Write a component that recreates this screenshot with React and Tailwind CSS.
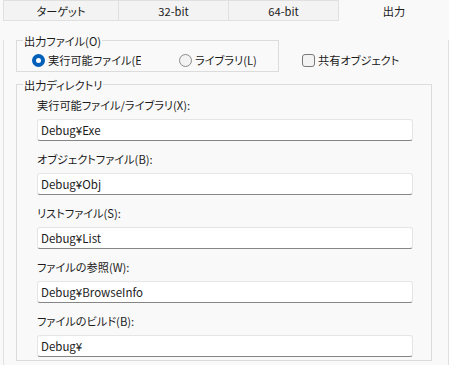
import React from "react";

const font = "font-['Noto_Sans_CJK_JP',sans-serif] [font-feature-settings:'palt']";

function Tab({ children, className }) {
  return (
    <div className={`flex items-center justify-center h-[21px] ${className}`}>
      <span className="leading-[14px]">{children}</span>
    </div>
  );
}

function Field({ label, value }) {
  return (
    <div className="flex flex-col">
      <div className="h-[16px] leading-[16px]">{label}</div>
      <div className="mt-[6px] h-[22px] w-[376px] bg-white border border-[#e5e5e5] border-b-[#868686] rounded-[3px] pl-[3px] flex items-center text-[11.5px]">
        <span className="leading-[14px]">{value}</span>
      </div>
    </div>
  );
}

export default function App() {
  const fields = [
    ["実行可能ファイル/ライブラリ(X):", "Debug¥Exe"],
    ["オブジェクトファイル(B):", "Debug¥Obj"],
    ["リストファイル(S):", "Debug¥List"],
    ["ファイルの参照(W):", "Debug¥BrowseInfo"],
    ["ファイルのビルド(B):", "Debug¥"],
  ];
  return (
    <div className={`w-[449px] h-[365px] overflow-hidden bg-[#f9f9f9] pl-[3px] text-[11.2px] text-[#1b1b1b] ${font}`}>
      <div className="flex h-[21px]">
        <Tab className="w-[116px] border border-[#e0e0e0] bg-[#f3f3f3]">ターゲット</Tab>
        <Tab className="w-[110px] border-y border-r border-[#e0e0e0] bg-[#f3f3f3]">32-bit</Tab>
        <Tab className="w-[110px] border-y border-r border-[#e0e0e0] bg-[#f3f3f3]">64-bit</Tab>
        <Tab className="flex-1">出力</Tab>
      </div>
      <div className="w-[446px] h-[344px] border-x border-[#e0e0e0] pl-[12px]">
        <div className="flex items-start mt-[19px]">
          <div className="w-[263px] border border-[#dcdcdc]">
            <div className="-mt-[7px] ml-[6px] px-[1px] w-fit bg-[#f9f9f9] leading-[14px]">出力ファイル(O)</div>
            <div className="mt-[4px] mb-[3px] h-[16px] flex items-center pl-[15px]">
              <div className="w-[109px] flex items-center overflow-hidden whitespace-nowrap">
                <span className="shrink-0 w-[13px] h-[13px] rounded-full bg-[#005fb8] flex items-center justify-center">
                  <span className="w-[5px] h-[5px] rounded-full bg-white" />
                </span>
                <span className="ml-[3px] leading-[14px]">実行可能ファイル(E)</span>
              </div>
              <div className="ml-[38px] flex items-center whitespace-nowrap">
                <span className="shrink-0 w-[13px] h-[13px] rounded-full border border-[#8a8a8a] bg-[#f3f3f3]" />
                <span className="ml-[3px] leading-[14px]">ライブラリ(L)</span>
              </div>
            </div>
          </div>
          <div className="ml-[23px] mt-[12px] h-[16px] flex items-center whitespace-nowrap">
            <span className="shrink-0 w-[13px] h-[13px] rounded-[3px] border border-[#7a7a7a] bg-[#f3f3f3]" />
            <span className="ml-[3px] leading-[14px]">共有オブジェクト</span>
          </div>
        </div>
        <div className="mt-[12px] w-[416px] border border-[#dcdcdc] pb-[3px]">
          <div className="-mt-[7px] ml-[6px] px-[1px] w-fit bg-[#f9f9f9] leading-[14px]">出力ディレクトリ</div>
          <div className="mt-[5px] pl-[20px] flex flex-col gap-[10px]">
            {fields.map(([l, v]) => (
              <Field key={l} label={l} value={v} />
            ))}
          </div>
        </div>
      </div>
    </div>
  );
}
